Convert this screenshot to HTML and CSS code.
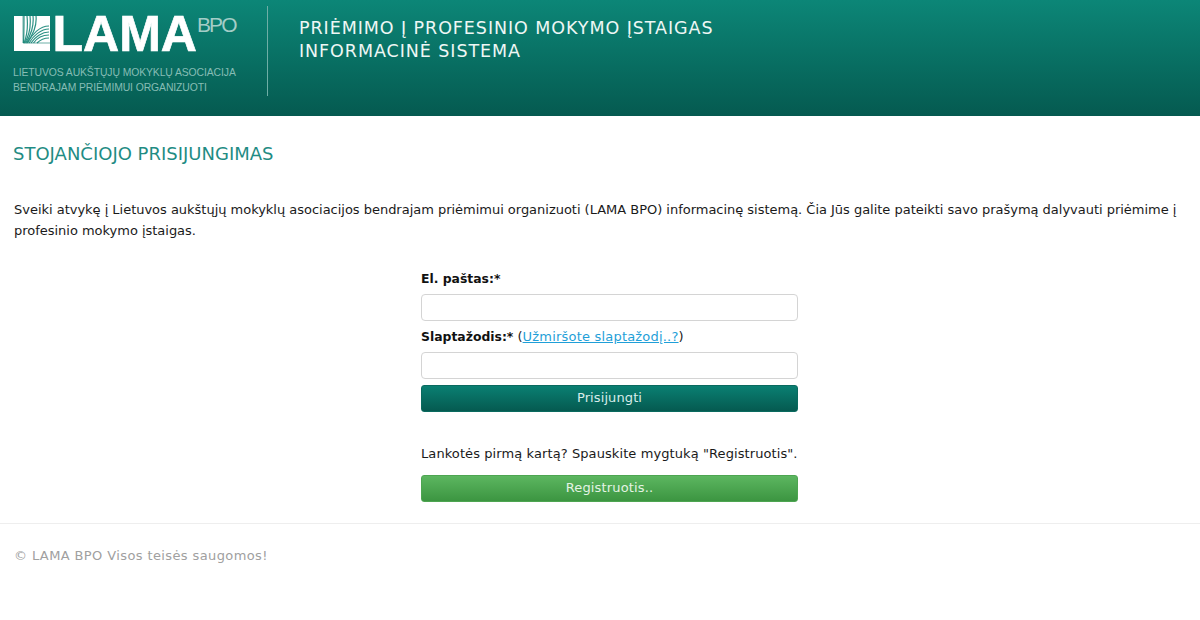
FILE: index.html
```html
<!DOCTYPE html>
<html lang="lt">
<head>
<meta charset="utf-8">
<title>LAMA BPO</title>
<link rel="stylesheet" href="styles.css">
</head>
<body>
<header class="top">
  <div class="brand">
    <div class="logo-row">
      <svg class="mark" viewBox="0 0 36 35" width="36" height="35" aria-hidden="true">
        <path d="M0 0H36V35H0Z" fill="#fff"/>
        <g fill="none" stroke="#2c9184" stroke-width="1.2">
          <path d="M10 0C10 10 10 20 9.5 27"/>
          <path d="M13 0C14 10 13 20 10 27"/>
          <path d="M16 0C17 10 15 20 10.5 27"/>
          <path d="M19 0C20 9 17 20 11.5 27"/>
          <path d="M22 0C23 9 19 20 12.5 27"/>
          <path d="M35 10C26 10 18 18 13.5 27"/>
          <path d="M35 13C27 13 19 20 15 27"/>
          <path d="M35 16C28 16 21 21 17 27"/>
          <path d="M35 19C29 19 23 22 19.5 27"/>
          <path d="M35 22C30 22 26 24 23 27"/>
        </g>
        <path d="M9 0V27H36" fill="none" stroke="#0a7a6d" stroke-width="0.6"/>
      </svg>
      <span class="lama">LAMA</span>
      <span class="bpo">BPO</span>
    </div>
    <div class="tagline">LIETUVOS AUKŠTŲJŲ MOKYKLŲ ASOCIACIJA<br>BENDRAJAM PRIĖMIMUI ORGANIZUOTI</div>
  </div>
  <div class="system">PRIĖMIMO Į PROFESINIO MOKYMO ĮSTAIGAS<br>INFORMACINĖ SISTEMA</div>
</header>
<main class="content">
  <h1 class="title">STOJANČIOJO PRISIJUNGIMAS</h1>
  <p class="intro">Sveiki atvykę į Lietuvos aukštųjų mokyklų asociacijos bendrajam priėmimui organizuoti (LAMA BPO) informacinę sistemą. Čia Jūs galite pateikti savo prašymą dalyvauti priėmime į profesinio mokymo įstaigas.</p>
  <form class="login">
    <label class="field-label first"><b>El. paštas:*</b></label>
    <input class="field" type="text">
    <label class="field-label second"><b>Slaptažodis:*</b> (<a href="#">Užmiršote slaptažodį..?</a>)</label>
    <input class="field" type="password">
    <button class="btn btn-teal" type="button">Prisijungti</button>
    <p class="first-time">Lankotės pirmą kartą? Spauskite mygtuką "Registruotis".</p>
    <button class="btn btn-green" type="button">Registruotis..</button>
  </form>
</main>
<footer class="foot">© LAMA BPO Visos teisės saugomos!</footer>
</body>
</html>
```
FILE: styles.css
```css
* { box-sizing: border-box; }
html, body { margin: 0; padding: 0; background: #fff; }
body {
  font-family: "DejaVu Sans", Verdana, sans-serif;
  font-size: 13px;
  color: #1a1a1a;
  height: 620px;
  overflow: hidden;
}
.top {
  height: 116px;
  display: flex;
  align-items: flex-start;
  background: linear-gradient(#0c8677, #055a50);
  color: #fff;
}
.brand {
  width: 268px;
  height: 90px;
  margin-top: 6px;
  padding: 10px 0 0 13px;
  border-right: 1px solid #6faea6;
}
.logo-row { display: flex; align-items: flex-start; height: 35px; }
.mark { display: block; flex: none; margin-left: 1px; }
.lama {
  font-family: "Liberation Sans", Arial, sans-serif;
  font-weight: 700;
  font-size: 50px;
  line-height: 36px;
  height: 36px;
  margin-left: 2.5px;
  -webkit-text-stroke: 0.7px #fff;
}
.bpo {
  font-family: "Liberation Sans", Arial, sans-serif;
  font-size: 21px;
  line-height: 18px;
  letter-spacing: -1.9px;
  color: #a3cdc7;
}
.tagline {
  margin-top: 14px;
  font-family: "Liberation Sans", Arial, sans-serif;
  font-size: 10.4px;
  line-height: 15px;
  letter-spacing: -0.1px;
  color: #86bdb5;
}
.system {
  margin: 17px 0 0 31px;
  font-size: 17.5px;
  line-height: 23px;
  letter-spacing: 0.93px;
  color: #eef7f5;
}
.content { padding: 0 13px; }
.title {
  margin: 28px 0 0;
  font-family: "DejaVu Sans", Verdana, sans-serif;
  font-weight: 400;
  font-size: 18px;
  line-height: 20px;
  color: #1f8c84;
}
.intro {
  margin: 35px 0 0;
  padding-left: 1px;
  line-height: 21px;
  letter-spacing: -0.02px;
}
.login {
  width: 377px;
  margin: 27px 0 0 408px;
  display: flex;
  flex-direction: column;
}
.field-label { display: block; line-height: 21px; }
.field-label.first { margin-bottom: 5px; }
.field-label.second { margin-top: 5px; margin-bottom: 5px; }
.field-label b { color: #111; font-size: 12.4px; }
.field-label a { color: #1f9fd8; letter-spacing: 0.2px; }
.field {
  display: block;
  width: 100%;
  height: 27px;
  border: 1px solid #d4d4d4;
  border-radius: 4px;
  background: #fff;
}
.btn {
  display: block;
  width: 100%;
  height: 27px;
  border-radius: 3px;
  font-family: inherit;
  font-size: 13px;
  padding: 0 0 2px;
}
.btn-teal {
  margin-top: 6px;
  border: 1px solid #0a6a5f;
  background: linear-gradient(#0a7f72, #055a50);
  color: #d8ecea;
  letter-spacing: 0.1px;
}
.first-time { margin: 31px 0 0; line-height: 21px; white-space: nowrap; letter-spacing: 0.09px; }
.btn-green {
  margin-top: 11px;
  border: 1px solid #4da551;
  background: linear-gradient(#5cb660, #3c9541);
  color: #e4f3e4;
  letter-spacing: 0.15px;
}
.foot {
  margin-top: 21px;
  border-top: 1px solid #eeeeee;
  padding: 21px 0 0 14px;
  line-height: 21px;
  letter-spacing: 0.39px;
  color: #a0a0a0;
}
```
